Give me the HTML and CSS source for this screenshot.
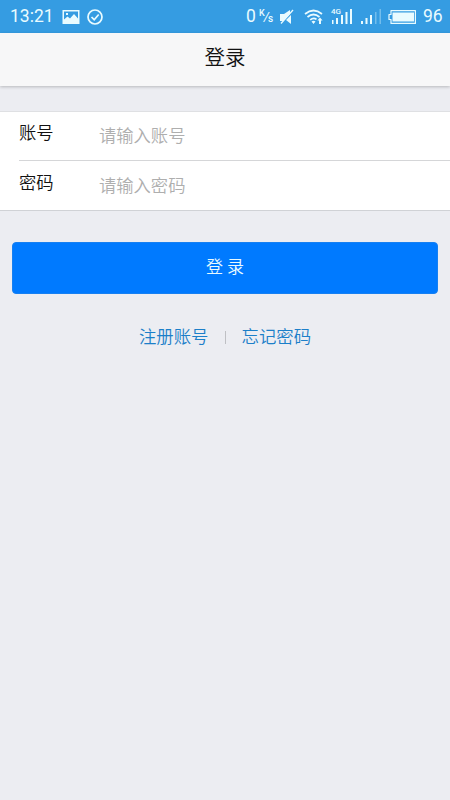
FILE: index.html
```html
<!DOCTYPE html>
<html lang="zh-CN">
<head>
<meta charset="utf-8">
<title>登录</title>
<link rel="stylesheet" href="styles.css">
</head>
<body>
<div class="status">
  <span class="time">13:21</span>
  <svg class="photo" width="18" height="14" viewBox="0 0 18 14"><path fill="currentColor" fill-rule="evenodd" d="M.5 0h17v14H.5zM2 1.500v8l3.500-3 2.500 2 4-4.500 4 4.500v-7zM4 3h2v2H4z"/></svg>
  <svg class="check" width="16" height="16" viewBox="0 0 16 16" fill="none" stroke="currentColor" stroke-width="1.700"><circle cx="8" cy="8" r="7"/><path d="M4.500 8l2.700 2.700 4.500-5.200"/></svg>
  <span class="speed">0</span>
  <span class="unit"><span>K</span><i>/</i><span class="sec">s</span></span>
  <svg class="mute" width="14" height="16" viewBox="0 0 14 16"><path fill="currentColor" d="M0 5h4l6-4v4L3 12H0zM11 6v9l-5-4z"/><path d="M1 14.500L13 1" stroke="currentColor" stroke-width="1.300"/></svg>
  <svg class="wifi" width="20" height="15" viewBox="0 0 20 15" fill="none" stroke="currentColor" stroke-width="1.700"><path d="M1 5Q9.500-2 18 5M3.500 8Q9.500 3 15.500 8M6.200 10.800Q9.500 8 12.500 10.300"/><path fill="currentColor" stroke="none" d="M7.500 12.500Q9.500 10.800 11.500 12.500L9.500 15zM16 8.500l2.600 3h-1.600v3.500h-2v-3.500h-1.600z"/></svg>
  <span class="signal4g"><small>4G</small><svg width="23" height="15" viewBox="0 0 23 15" fill="currentColor"><path d="M1 11h1.500v4H1zM5 9h2v6H5zM10 6h2v9h-2zM14.500 3h2v12h-2zM19 0h2v15h-2z"/></svg></span>
  <svg class="signal" width="21" height="15" viewBox="0 0 21 15" fill="currentColor"><path d="M0 12h2v3H0zM4.500 9h2v6h-2zM9 6h2v9H9z"/><path opacity=".35" d="M14 3h1.500v12H14zM18.500 0h1.500v15h-1.500z"/></svg>
  <svg class="battery" width="29" height="14" viewBox="0 0 29 14"><path fill="none" stroke="currentColor" stroke-width="1.200" stroke-linejoin="round" d="M3 .6h24.400v12.800H3V9.500H1v-5h2z"/><path fill="currentColor" d="M4.500 2.500h21.500v9H4.500z"/></svg>
  <span class="level">96</span>
</div>
<header class="title">登录</header>
<main>
  <form class="fields">
    <label class="row"><span>账号</span><input type="text" placeholder="请输入账号"></label>
    <label class="row"><span>密码</span><input type="password" placeholder="请输入密码"></label>
  </form>
  <button class="login" type="button">登 录</button>
  <nav class="links"><a>注册账号</a><i></i><a>忘记密码</a></nav>
</main>
</body>
</html>
```

FILE: styles.css
```css
* { box-sizing: border-box; }
body {
  margin: 0;
  min-height: 800px;
  background: #ecedf2;
  color: #111;
  font-family: "Noto Sans CJK SC", sans-serif;
  font-weight: 350;
}
.status {
  display: flex;
  align-items: center;
  height: 33px;
  padding: 0 7px 0 10px;
  background: #359ce2;
  color: #e9fbff;
  font: 400 17.5px/31px Roboto, sans-serif;
}
.status svg { display: block; flex: none; }
.time { width: 52px; }
.check { margin-left: 7px; }
.speed { margin-left: auto; width: 13px; }
.unit { display: flex; width: 13px; height: 18px; font-size: 9px; line-height: 10px; font-weight: 500; }
.unit i { font-size: 13px; line-height: 17px; font-weight: 400; margin: 0 -1px; }
.unit .sec { padding-top: 6px; font-size: 10px; }
.mute { margin-left: 8px; }
.wifi { margin-left: 10px; }
.signal4g { position: relative; margin-left: 7px; }
.signal4g small { position: absolute; left: 0; top: -1px; font-size: 8px; line-height: 8px; font-weight: 500; }
.signal { margin-left: 7px; }
.battery { margin-left: 6px; }
.level { margin-left: 6px; width: 20px; }
.title {
  height: 53px;
  background: #f7f7f8;
  box-shadow: 0 1px 3px rgba(0, 0, 0, .22);
  text-align: center;
  font-size: 20.5px;
  line-height: 46px;
}
.fields {
  margin-top: 25px;
  padding-left: 19px;
  background: #fff;
  border-top: 1px solid #dfe0e3;
  border-bottom: 1px solid #d0d2d6;
}
.row {
  display: flex;
  height: 48px;
  font-size: 17.3px;
}
.row + .row { height: 50px; padding-top: 1px; border-top: 1px solid #d5d6d8; }
.row span { width: 80px; line-height: 39px; }
.row input {
  flex: 1;
  min-width: 0;
  height: 44px;
  padding: 0;
  border: 0;
  outline: 0;
  background: none;
  font: inherit;
}
.row input::placeholder { color: #aeaeae; opacity: 1; }
.login {
  display: block;
  width: 426px;
  height: 52px;
  margin: 31px 0 0 12px;
  padding: 0 0 5px;
  border: 1px solid #1680f2;
  border-radius: 4px;
  background: #007aff;
  color: #e9faff;
  font: inherit;
  font-size: 17px;
}
.links {
  display: flex;
  justify-content: center;
  align-items: center;
  margin-top: 29px;
  height: 26px;
  color: #1c7fc9;
  font-size: 17.4px;
  line-height: 26px;
}
.links i { width: 1px; height: 13px; margin: 2px 16px 0; background: #bfc0c4; }
```
